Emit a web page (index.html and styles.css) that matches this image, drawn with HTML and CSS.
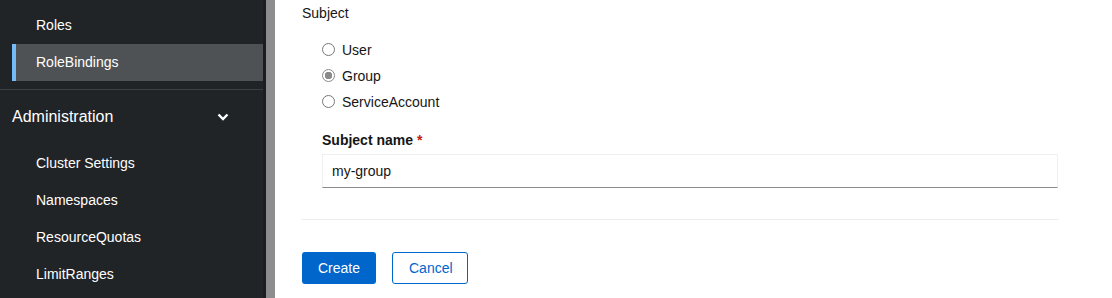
FILE: index.html
```html
<!DOCTYPE html>
<html lang="en">
<head>
  <meta charset="UTF-8">
  <meta name="viewport" content="width=device-width, initial-scale=1.0">
  <title>Create RoleBinding</title>
  <link rel="stylesheet" href="styles.css">
</head>
<body>
  <div class="page">
    <nav class="sidebar">
      <ul class="nav-list nav-list--top">
        <li class="nav-item">Roles</li>
        <li class="nav-item nav-item--current">RoleBindings</li>
      </ul>

      <div class="nav-section">
        <span>Administration</span>
        <svg class="chevron" width="12" height="8" viewBox="0 0 12 8">
          <path d="M1.5 1.5 L6 6 L10.5 1.5" fill="none" stroke="#fff" stroke-width="2.4"/>
        </svg>
      </div>
      <ul class="nav-list">
        <li class="nav-item">Cluster Settings</li>
        <li class="nav-item">Namespaces</li>
        <li class="nav-item">ResourceQuotas</li>
        <li class="nav-item">LimitRanges</li>
      </ul>
    </nav>

    <div class="scrollbar"></div>

    <main class="content">
      <div class="field-label">Subject</div>

      <div class="radio-group">
        <label class="radio"><span class="radio-dot"></span>User</label>
        <label class="radio"><span class="radio-dot radio-dot--checked"></span>Group</label>
        <label class="radio"><span class="radio-dot"></span>ServiceAccount</label>
      </div>

      <div class="form-group">
        <div class="form-label">Subject name <span class="required">*</span></div>
        <div class="text-input">my-group</div>
      </div>

      <hr class="divider">

      <div class="actions">
        <button class="btn btn--primary">Create</button>
        <button class="btn btn--secondary">Cancel</button>
      </div>
    </main>
  </div>
</body>
</html>
```

FILE: styles.css
```css
:root {
  --nav-bg: #212427;
  --nav-current: #4f5255;
  --nav-border: #3c3f42;
  --accent: #73bcf7;
  --primary: #0066cc;
  --text: #151515;
  --border: #f0f0f0;
  --border-dark: #8a8d90;
}

* {
  margin: 0;
  padding: 0;
  box-sizing: border-box;
}

body {
  font-family: "Liberation Sans", Arial, sans-serif;
  font-size: 14px;
  color: var(--text);
  background-color: #fff;
  overflow: hidden;
}

.page {
  display: flex;
  height: 298px;
}

.sidebar {
  width: 263px;
  flex-shrink: 0;
  background-color: var(--nav-bg);
  color: #fff;
  padding-top: 7px;
}

.nav-list {
  list-style: none;
  padding-top: 1px;
}

.nav-list--top {
  padding-top: 0;
  padding-bottom: 8px;
  border-bottom: 1px solid var(--nav-border);
}

.nav-item {
  height: 37px;
  line-height: 37px;
  margin-left: 12px;
  padding-left: 24px;
}

.nav-item--current {
  background-color: var(--nav-current);
  border-left: 4px solid var(--accent);
  padding-left: 20px;
}

.nav-section {
  display: flex;
  justify-content: space-between;
  align-items: center;
  height: 54px;
  padding: 0 34px 0 12px;
  font-size: 16px;
}

.chevron {
  display: block;
}

.scrollbar {
  width: 12px;
  flex-shrink: 0;
  background-color: #8b8d8f;
  border-left: 3px solid #1b1d21;
}

.content {
  flex: 1;
  padding: 5px 54px 0 27px;
}

.field-label {
  line-height: 17px;
}

.radio-group {
  padding: 19px 0 0 20px;
  display: flex;
  flex-direction: column;
  gap: 9px;
}

.radio {
  display: flex;
  align-items: center;
  gap: 7px;
  height: 17px;
}

.radio-dot {
  width: 13px;
  height: 13px;
  border: 1px solid #767676;
  border-radius: 50%;
  background-color: #fff;
}

.radio-dot--checked {
  border-color: #8a8a8a;
  background: radial-gradient(circle, #8a8a8a 0 3.5px, #fff 4px);
}

.form-group {
  padding: 20px 0 0 20px;
}

.form-label {
  font-weight: bold;
  line-height: 20px;
  margin-bottom: 4px;
}

.required {
  color: #c9190b;
}

.text-input {
  height: 34px;
  line-height: 32px;
  padding: 0 9px;
  border: 1px solid var(--border);
  border-bottom-color: var(--border-dark);
}

.divider {
  border: none;
  border-top: 1px solid #ececec;
  margin-top: 31px;
}

.actions {
  display: flex;
  gap: 16px;
  margin-top: 32px;
}

.btn {
  font-family: inherit;
  font-size: 14px;
  height: 32px;
  border-radius: 3px;
  padding: 0 16px;
  cursor: pointer;
}

.btn--primary {
  background-color: var(--primary);
  color: #fff;
  border: none;
  width: 74px;
}

.btn--secondary {
  background-color: #fff;
  color: var(--primary);
  border: 1px solid var(--primary);
  width: 76px;
}
```
